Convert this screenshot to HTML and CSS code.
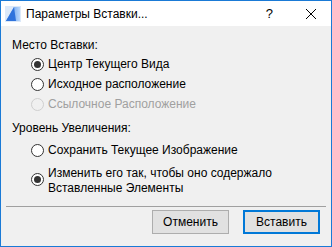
FILE: index.html
```html
<!DOCTYPE html>
<html lang="ru">
<head>
    <meta charset="UTF-8">
    <title>Параметры Вставки...</title>
    <link rel="stylesheet" href="styles.css">
</head>
<body>
    <div class="window">
        <!-- Title Bar -->
        <div class="titlebar">
            <svg class="app-icon" width="16" height="16" viewBox="0 0 16 16">
                <defs>
                    <linearGradient id="g" x1="0" y1="0" x2="1" y2="0">
                        <stop offset="0" stop-color="#3f86e8"/>
                        <stop offset="1" stop-color="#b9d7fb"/>
                    </linearGradient>
                </defs>
                <rect x="0" y="0" width="16" height="16" fill="#dce9f9"/>
                <path d="M1 15 L9 1 L15 1 L15 15 Z" fill="url(#g)"/>
                <path d="M1 15 L9 1 L11 15 Z" fill="#2f73dc"/>
            </svg>
            <span class="title">Параметры Вставки...</span>
            <span class="help">?</span>
            <svg class="close" width="12" height="12" viewBox="0 0 12 12">
                <path d="M1 1 L11 11 M11 1 L1 11" stroke="#000" stroke-width="1"/>
            </svg>
        </div>

        <!-- Dialog Content -->
        <div class="content">
            <div class="group-label">Место Вставки:</div>
            <label class="option">
                <span class="radio checked"></span>
                <span>Центр Текущего Вида</span>
            </label>
            <label class="option">
                <span class="radio"></span>
                <span>Исходное расположение</span>
            </label>
            <label class="option disabled">
                <span class="radio"></span>
                <span>Ссылочное Расположение</span>
            </label>

            <div class="group-label second">Уровень Увеличения:</div>
            <label class="option first-zoom">
                <span class="radio"></span>
                <span>Сохранить Текущее Изображение</span>
            </label>
            <label class="option multi">
                <span class="radio checked"></span>
                <span>Изменить его так, чтобы оно содержало<br>Вставленные Элементы</span>
            </label>
        </div>

        <!-- Buttons -->
        <div class="footer">
            <button class="btn">Отменить</button>
            <button class="btn default">Вставить</button>
        </div>
    </div>
</body>
</html>
```

FILE: styles.css
```css
/* General Reset */
* {
    margin: 0;
    padding: 0;
    box-sizing: border-box;
}

body {
    font-family: "Liberation Sans", Arial, sans-serif;
    font-size: 12px;
    color: #000;
    background-color: #fff;
}

/* Window Frame */
.window {
    width: 332px;
    height: 247px;
    border: 1px solid #1a7ad6;
    background-color: #f0f0f0;
    display: flex;
    flex-direction: column;
}

/* Title Bar */
.titlebar {
    height: 25px;
    background-color: #fff;
    display: flex;
    align-items: center;
    padding-left: 4px;
}

.app-icon {
    margin-right: 5px;
}

.title {
    font-size: 12px;
    flex: 1;
}

.help {
    font-size: 13px;
    margin-right: 32px;
}

.close {
    margin-right: 14px;
}

/* Content */
.content {
    padding: 10px 0 0 11px;
    flex: 1;
}

.group-label {
    line-height: 18px;
}

.group-label.second {
    margin-top: 5px;
}

.option {
    display: flex;
    align-items: center;
    height: 20px;
    padding-left: 19px;
}

.option.first-zoom {
    margin-top: 3px;
}

.option.multi {
    height: auto;
    margin-top: 6px;
    line-height: 15px;
    align-items: flex-start;
}

.option.multi .radio {
    margin-top: 7px;
}

.radio {
    width: 13px;
    height: 13px;
    border: 1px solid #333;
    border-radius: 50%;
    background-color: #fff;
    margin-right: 4px;
    display: flex;
    align-items: center;
    justify-content: center;
    flex-shrink: 0;
}

.radio.checked::after {
    content: "";
    width: 7px;
    height: 7px;
    border-radius: 50%;
    background-color: #333;
}

.option.disabled {
    color: #a0a0a0;
}

.option.disabled .radio {
    border-color: #cfcfcf;
    background-color: #f0f0f0;
}

/* Footer */
.footer {
    margin: 0 5px;
    border-top: 1px solid #a0a0a0;
    height: 40px;
    display: flex;
    justify-content: flex-end;
    align-items: flex-start;
    padding: 3px 6px 0 0;
    gap: 14px;
}

.btn {
    width: 77px;
    height: 24px;
    font-family: "Liberation Sans", Arial, sans-serif;
    font-size: 12px;
    background-color: #e1e1e1;
    border: 1px solid #adadad;
    color: #000;
}

.btn.default {
    border: 2px solid #0078d7;
}
```
